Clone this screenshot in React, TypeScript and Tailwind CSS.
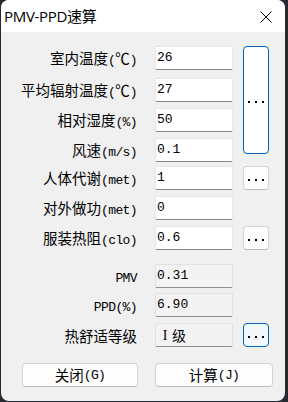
import React from 'react';

const CJK = "font-['Noto_Sans_CJK_SC',sans-serif]";

// split a label into CJK runs and half-width ASCII runs
function Runs({ text }: { text: string }) {
  const parts = text.split(/([\x20-\x7e]+)/).filter(Boolean);
  return (
    <>
      {parts.map((s, i) =>
        /^[\x20-\x7e]+$/.test(s) ? (
          <span key={i} className="font-['Liberation_Mono',monospace] text-[13px] tracking-[-0.6px]">
            {s}
          </span>
        ) : (
          <span key={i}>{s}</span>
        )
      )}
    </>
  );
}

function Field({ value, readOnly }: { value: React.ReactNode; readOnly?: boolean }) {
  return (
    <div
      className={
        readOnly
          ? "ml-[18px] flex h-6 w-[78px] items-center rounded-[2px] border border-[#e2e2e2] border-b-[#8f8f8f] bg-[#f3f3f3] pl-[1px] font-['Liberation_Mono',monospace] text-[13px] text-black"
          : "ml-[18px] flex h-6 w-[78px] items-center rounded-[2px] border border-[#e6e6e6] border-b-[#868686] bg-white pl-[1px] font-['Liberation_Mono',monospace] text-[13px] text-black"
      }
    >
      {value}
    </div>
  );
}

function Dots() {
  return (
    <span className="flex gap-[5px] pt-[3px]">
      <span className="h-[2px] w-[2px] bg-black" />
      <span className="h-[2px] w-[2px] bg-black" />
      <span className="h-[2px] w-[2px] bg-black" />
    </span>
  );
}

function SmallBtn({ active }: { active?: boolean }) {
  return (
    <button
      className={
        active
          ? 'ml-[10px] flex h-6 w-[26px] items-center justify-center rounded-[4px] border border-[#0067c0] bg-[#f3f8fd]'
          : 'ml-[10px] flex h-6 w-[26px] items-center justify-center rounded-[4px] border border-[#d3d3d3] border-b-[#b8b8b8] bg-[#fdfdfd]'
      }
    >
      <Dots />
    </button>
  );
}

function Row({
  label,
  value,
  readOnly,
  btn,
  className = '',
}: {
  label: string;
  value: React.ReactNode;
  readOnly?: boolean;
  btn?: 'plain' | 'active';
  className?: string;
}) {
  return (
    <div className={'flex h-6 items-center ' + className}>
      <div className="w-[136px] pt-[2px] text-right text-[14.5px] leading-none whitespace-nowrap text-black">
        <Runs text={label} />
      </div>
      <Field value={value} readOnly={readOnly} />
      {btn && <SmallBtn active={btn === 'active'} />}
    </div>
  );
}

export default function App() {
  return (
    <div className={'h-[402px] w-[288px] bg-[#262a30] ' + CJK}>
      <div className="ml-[1px] flex h-[401px] w-[284px] flex-col overflow-hidden rounded-[8px] bg-[#f0f0f0]">
        <div className="flex h-8 shrink-0 items-center justify-between bg-white pl-[3px] pr-[13px]">
          <span className="font-['Open_Sans','Noto_Sans_CJK_SC',sans-serif] text-[15px] tracking-[-0.3px] text-black">
            PMV-PPD速算
          </span>
          <svg width="12" height="12" viewBox="0 0 12 12" className="mt-[1px]">
            <path d="M0.5 0.5L11.5 11.5M11.5 0.5L0.5 11.5" stroke="#000" strokeWidth="1" />
          </svg>
        </div>

        <div className="flex flex-col pt-[14px]">
          <div className="flex">
            <div className="flex flex-col">
              <Row label="室内温度(℃)" value="26" />
              <Row label="平均辐射温度(℃)" value="27" className="mt-[8px]" />
              <Row label="相对湿度(%)" value="50" className="mt-[6px]" />
              <Row label="风速(m/s)" value="0.1" className="mt-[6px]" />
            </div>
            <button className="ml-[10px] flex h-[108px] w-[26px] items-center justify-center rounded-[4px] border border-[#0067c0] bg-white">
              <Dots />
            </button>
          </div>
          <Row label="人体代谢(met)" value="1" btn="plain" className="mt-[4px]" />
          <Row label="对外做功(met)" value="0" className="mt-[6px]" />
          <Row label="服装热阻(clo)" value="0.6" btn="plain" className="mt-[6px]" />
          <Row label="PMV" value="0.31" readOnly className="mt-[14px]" />
          <Row label="PPD(%)" value="6.90" readOnly className="mt-[5px]" />
          <Row
            label="热舒适等级"
            value={
              <span className={'flex items-center text-[14px] ' + CJK}>
                <span className="inline-block w-[14px] pl-[2px] text-center font-['Liberation_Serif',serif]">I</span>
                <span className="ml-[1px]">级</span>
              </span>
            }
            readOnly
            btn="active"
            className="mt-[6px]"
          />

          <div className="mt-[16px] flex">
            <button className="ml-[21px] flex h-6 w-[116px] items-center justify-center rounded-[4px] border border-[#d3d3d3] border-b-[#b8b8b8] bg-[#fdfdfd] text-[14.5px] leading-none text-black">
              <Runs text="关闭(G)" />
            </button>
            <button className="ml-[17px] flex h-6 w-[118px] items-center justify-center rounded-[4px] border border-[#d3d3d3] border-b-[#b8b8b8] bg-[#fdfdfd] text-[14.5px] leading-none text-black">
              <Runs text="计算(J)" />
            </button>
          </div>
        </div>
      </div>
    </div>
  );
}
